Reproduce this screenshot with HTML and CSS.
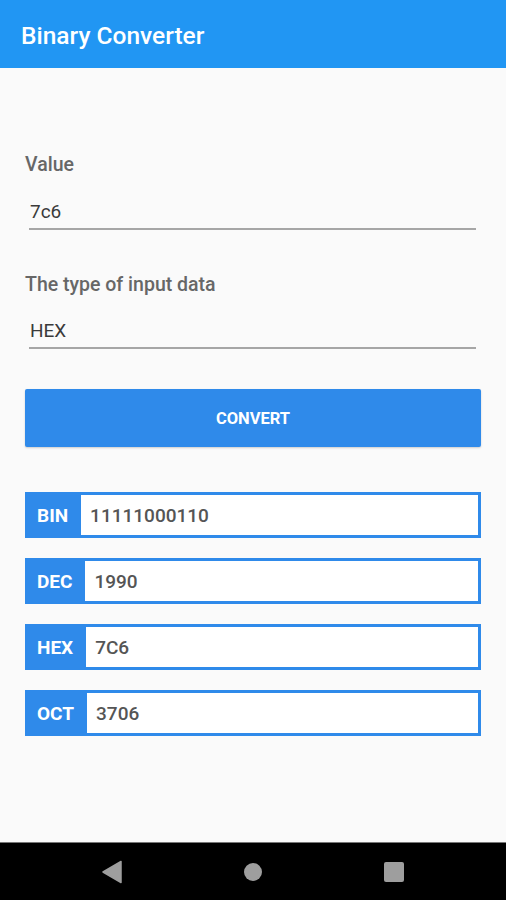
FILE: index.html
```html
<!DOCTYPE html>
<html>
<head>
<meta charset="utf-8">
<link rel="stylesheet" href="styles.css">
</head>
<body>
<div class="screen">
  <header class="appbar"><h1 class="title">Binary Converter</h1></header>
  <main class="content">
    <div class="field-label first">Value</div>
    <div class="text-input">7c6</div>
    <div class="field-label second">The type of input data</div>
    <div class="text-input">HEX</div>
    <button class="convert">CONVERT</button>
    <div class="results">
      <div class="result"><span class="tag">BIN</span><span class="val">11111000110</span></div>
      <div class="result"><span class="tag">DEC</span><span class="val">1990</span></div>
      <div class="result"><span class="tag">HEX</span><span class="val">7C6</span></div>
      <div class="result"><span class="tag">OCT</span><span class="val">3706</span></div>
    </div>
  </main>
  <nav class="navbar">
    <span class="nav-btn"><svg width="22" height="24" viewBox="0 0 22 24"><path d="M20 1.5 L20 22.5 L2 12 Z" fill="#9e9e9e" stroke="#9e9e9e" stroke-width="1.5" stroke-linejoin="round"/></svg></span>
    <span class="nav-btn"><svg width="20" height="20" viewBox="0 0 20 20"><circle cx="10" cy="10" r="9" fill="#9e9e9e"/></svg></span>
    <span class="nav-btn"><svg width="22" height="22" viewBox="0 0 22 22"><rect x="1" y="1" width="20" height="20" rx="2" fill="#9e9e9e"/></svg></span>
  </nav>
</div>
</body>
</html>
```
FILE: styles.css
```css
* { box-sizing: border-box; }
html, body { margin: 0; padding: 0; }
body { font-family: Roboto, "Liberation Sans", sans-serif; background: #fafafa; }
.screen { width: 506px; height: 900px; display: flex; flex-direction: column; }
.appbar { height: 68px; background: #2196f3; display: flex; align-items: center; padding-left: 21px; flex: none; }
.title { margin: 0; color: #fff; font-size: 24.5px; font-weight: 500; line-height: 28px; padding-top: 4px; }
.content { flex: 1; padding: 85px 25px 0 25px; }
.field-label { font-size: 19.5px; font-weight: 500; color: #676767; line-height: 24px; }
.field-label.second { margin-top: 43px; }
.text-input { margin: 0 5px 0 4px; padding: 23px 0 4px 1px; font-size: 19px; line-height: 24px; color: #3a3a3a; border-bottom: 2px solid #a6a6a6; }
.text-input + .field-label + .text-input { padding-top: 22px; }
.convert { display: block; width: 100%; height: 58px; margin-top: 40px; border: none; border-radius: 2px; background: #2f8aea; color: #fff; font-family: Roboto, "Liberation Sans", sans-serif; font-size: 16.5px; font-weight: 700; box-shadow: 0 1px 2px rgba(0,0,0,0.18); }
.results { margin-top: 45px; display: flex; flex-direction: column; gap: 20px; }
.result { display: flex; height: 46px; border: 3px solid #2f8aea; background: #fff; }
.tag { background: #2f8aea; color: #fff; font-size: 19px; font-weight: 700; display: flex; align-items: center; padding: 0 13px 0 9px; }
.val { display: flex; align-items: center; padding-left: 9px; font-size: 19px; color: #555; font-weight: 500; }
.navbar { height: 58px; flex: none; background: #000; border-top: 1px solid #777; display: flex; justify-content: center; align-items: center; gap: 101px; }
.nav-btn { width: 40px; display: flex; justify-content: center; align-items: center; }
```
